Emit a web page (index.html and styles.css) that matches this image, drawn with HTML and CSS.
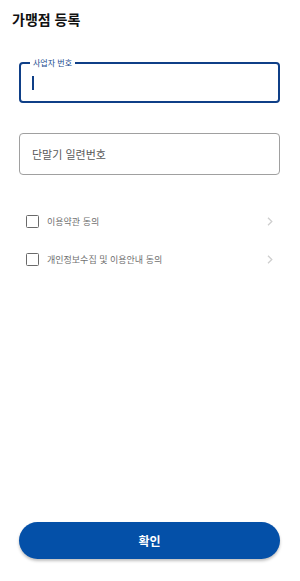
FILE: index.html
```html
<!DOCTYPE html>
<html lang="ko">
<head>
<meta charset="utf-8">
<link rel="stylesheet" href="styles.css">
</head>
<body>
<div class="page">
  <h1 class="title">가맹점 등록</h1>
  <div class="field field-focused">
    <span class="field-label">사업자 번호</span>
    <span class="cursor"></span>
  </div>
  <div class="field field-idle">
    <span class="placeholder">단말기 일련번호</span>
  </div>
  <div class="agree-list">
    <div class="agree-row">
      <span class="checkbox"></span>
      <span class="agree-text">이용약관 동의</span>
      <svg class="chevron" viewBox="0 0 6 9" width="6" height="9"><path d="M1 0.8 L4.8 4.5 L1 8.2" fill="none" stroke="#cfcfcf" stroke-width="1.3"/></svg>
    </div>
    <div class="agree-row">
      <span class="checkbox"></span>
      <span class="agree-text">개인정보수집 및 이용안내 동의</span>
      <svg class="chevron" viewBox="0 0 6 9" width="6" height="9"><path d="M1 0.8 L4.8 4.5 L1 8.2" fill="none" stroke="#cfcfcf" stroke-width="1.3"/></svg>
    </div>
  </div>
  <button class="confirm">확인</button>
</div>
</body>
</html>
```

FILE: styles.css
```css
* { box-sizing: border-box; }
html, body { margin: 0; padding: 0; background: #fff; }
body { font-family: "Noto Sans CJK KR", "Noto Sans", sans-serif; color: #111; }
.page {
  height: 581px;
  display: flex;
  flex-direction: column;
  padding: 9px 20px 22px 19px;
}
.title {
  margin: 0 0 0 -7px;
  font-size: 14px;
  line-height: 20px;
  font-weight: 700;
  color: #111;
}
.field {
  position: relative;
  height: 41px;
  border-radius: 4px;
  display: flex;
  align-items: center;
  padding-left: 12px;
}
.field-focused {
  margin-top: 33px;
  border: 2px solid #0f3f87;
}
.field-label {
  position: absolute;
  left: 9px;
  top: -7px;
  padding: 0 3px;
  background: #fff;
  font-size: 8px;
  line-height: 11px;
  color: #1a4b8e;
}
.cursor {
  display: block;
  width: 1.5px;
  height: 14px;
  background: #0f3f87;
  margin-left: -1px;
}
.field-idle {
  margin-top: 30px;
  height: 42px;
  border: 1px solid #a0a0a0;
}
.placeholder {
  font-size: 11px;
  color: #5a5a5a;
}
.agree-list {
  margin-top: 38px;
  display: flex;
  flex-direction: column;
  gap: 22px;
}
.agree-row {
  display: flex;
  align-items: center;
  height: 16px;
  padding-left: 7px;
  padding-right: 7px;
}
.checkbox {
  width: 13px;
  height: 13px;
  border: 1.6px solid #6a6a6a;
  border-radius: 1.5px;
  flex: none;
}
.agree-text {
  margin-left: 8px;
  font-size: 9px;
  color: #707070;
  flex: 1;
}
.chevron { flex: none; }
.confirm {
  margin-top: auto;
  height: 37px;
  border: 0;
  border-radius: 19px;
  background: #0450a8;
  color: #fff;
  font-family: "Noto Sans CJK KR", sans-serif;
  font-size: 12px;
  font-weight: 700;
  box-shadow: 0 2px 3px rgba(0,0,0,0.25);
}
```
